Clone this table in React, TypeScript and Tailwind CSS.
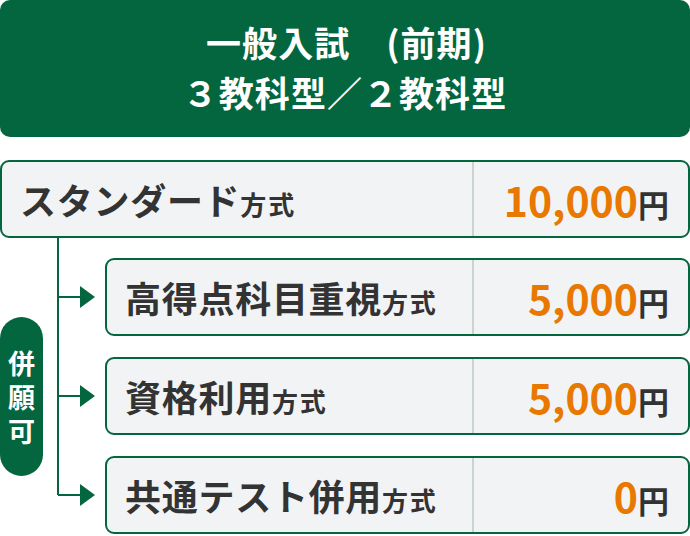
import React from "react";

const font = { fontFamily: '"Noto Sans CJK JP", "Noto Sans", sans-serif' };

type Row = { name: string; price: string };

const subRows: Row[] = [
  { name: "高得点科目重視", price: "5,000" },
  { name: "資格利用", price: "5,000" },
  { name: "共通テスト併用", price: "0" },
];

function PlanBox({ name, price }: Row) {
  return (
    <div className="flex h-[78px] flex-1 rounded-[9px] border-2 border-[#04663f] bg-[#f2f3f5]">
      <div className="flex flex-1 items-baseline self-center pl-[18px] font-bold text-[#333333]">
        <span className="text-[36px] leading-none tracking-[0.02em]">{name}</span>
        <span className="text-[26px] leading-none tracking-[0.07em]">方式</span>
      </div>
      <div className="flex w-[216px] items-center justify-end border-l-2 border-[#c9d4d0] pr-[19px] font-bold">
        <span className="flex items-baseline">
          <span className="text-[41px] leading-none text-[#e87800]">{price}</span>
          <span className="text-[31px] leading-none text-[#333333]">円</span>
        </span>
      </div>
    </div>
  );
}

export default function App() {
  return (
    <div className="h-[536px] w-[690px] overflow-hidden bg-white" style={font}>
      <div className="flex h-[137px] flex-col items-center justify-center rounded-[10px] bg-[#04663f] pb-[4px] text-[35px] font-bold leading-[50px] tracking-[0.03em] text-white">
        <div className="pl-[3px]">一般入試　(前期)</div>
        <div>３教科型／２教科型</div>
      </div>

      <div className="mt-[23px] flex">
        <PlanBox name="スタンダード" price="10,000" />
      </div>

      <div className="flex">
        <div className="flex w-[43px] items-center pt-[20px]">
          <div className="flex h-[159px] w-[43px] flex-col items-center justify-center gap-[7px] rounded-full bg-[#04663f] text-[27px] font-bold leading-none text-white">
            <span>併</span>
            <span>願</span>
            <span>可</span>
          </div>
        </div>
        <div className="relative flex flex-1 flex-col gap-[21px] pt-[20px]">
          <div className="absolute bottom-[39px] left-[14px] top-0 w-[2px] bg-[#04663f]" />
          {subRows.map((r) => (
            <div key={r.name} className="flex items-center">
              <div className="ml-[15px] h-[2px] w-[22px] bg-[#04663f]" />
              <svg width="15" height="22" viewBox="0 0 15 22" className="shrink-0">
                <polygon points="0,0 15,11 0,22" fill="#04663f" />
              </svg>
              <div className="ml-[10px] flex flex-1">
                <PlanBox name={r.name} price={r.price} />
              </div>
            </div>
          ))}
        </div>
      </div>
    </div>
  );
}
